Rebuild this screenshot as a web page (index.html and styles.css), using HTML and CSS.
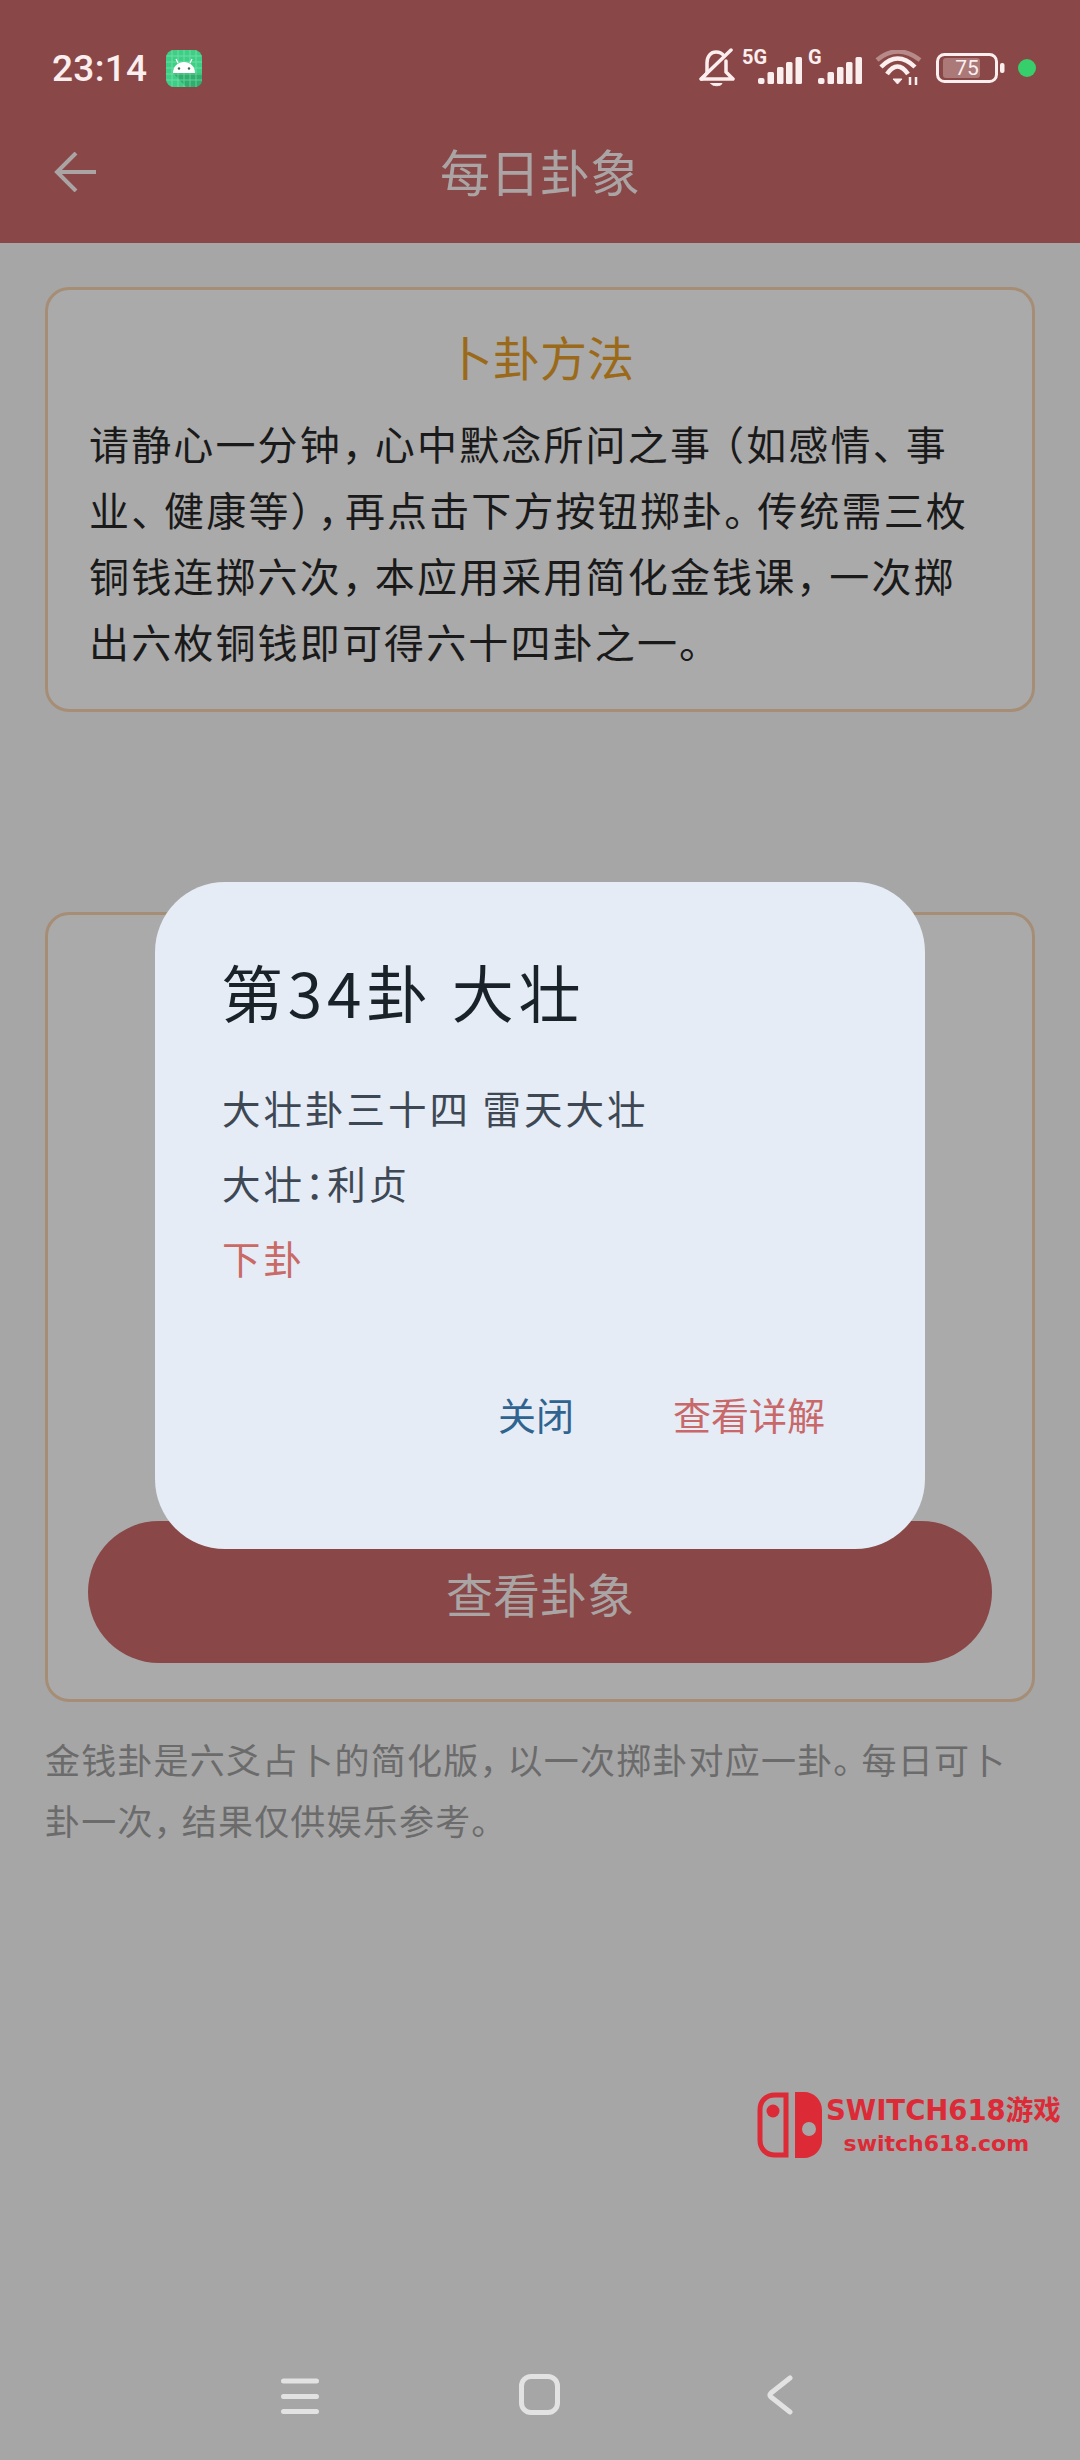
FILE: index.html
```html
<!DOCTYPE html>
<html lang="zh-CN">
<head>
<meta charset="utf-8">
<title>每日卦象</title>
<link rel="stylesheet" href="styles.css">
</head>
<body>
<div class="screen">
  <header class="header">
    <div class="status">
      <span class="time">23:14</span>
      <svg class="android" viewBox="0 0 36 37">
        <rect width="36" height="37" rx="8" fill="#3ecf86"/>
        <path d="M7 23 L20 37 H28 Q36 37 36 29 V23 Z" fill="#2fae6d"/>
        <path d="M6 0V37M12 0V37M18 0V37M24 0V37M30 0V37M0 6H36M0 12H36M0 18H36M0 24H36M0 30H36" stroke="#8fe6b8" stroke-width="1" opacity=".6"/>
        <path d="M7 23 C7 16 12 12 18 12 C24 12 29 16 29 23 Z" fill="#fff"/>
        <path d="M12 13 L10 9M24 13 L26 9" stroke="#fff" stroke-width="1.2"/>
        <circle cx="13" cy="18.5" r="1.2" fill="#3a6a50"/><circle cx="23" cy="18.5" r="1.2" fill="#3a6a50"/>
      </svg>
      <div class="status-icons">
        <svg class="bell" viewBox="0 0 36 40" fill="none" stroke="#fbeeee" stroke-width="3.5" stroke-linecap="round" stroke-linejoin="round">
          <path d="M3 31 L8 25 V15 C8 8 12 4 17 4 C20 4 23 5 25 8"/>
          <path d="M27 13 V24 L34 31 H3"/>
          <path d="M2 31 L32 2"/>
          <path d="M12 35.5 H23 C22 38.5 13 38.5 12 35.5 Z" fill="#fbeeee" stroke-width="1"/>
        </svg>
        <div class="signal signal-5g">
          <span class="net">5G</span>
          <svg class="bars" viewBox="0 0 44 27" fill="#fbeeee">
            <rect x="0" y="21" width="6.5" height="6" rx="2"/><rect x="9.5" y="15" width="6.5" height="12" rx="1.5"/><rect x="19" y="10" width="6.5" height="17" rx="1.5"/><rect x="28" y="5" width="6.5" height="22" rx="1.5"/><rect x="37.5" y="0" width="6.5" height="27" rx="1.5"/>
          </svg>
        </div>
        <div class="signal signal-g">
          <span class="net">G</span>
          <svg class="bars" viewBox="0 0 44 27" fill="#fbeeee">
            <rect x="0" y="21" width="6.5" height="6" rx="2"/><rect x="9.5" y="15" width="6.5" height="12" rx="1.5"/><rect x="19" y="10" width="6.5" height="17" rx="1.5"/><rect x="28" y="5" width="6.5" height="22" rx="1.5"/><rect x="37.5" y="0" width="6.5" height="27" rx="1.5"/>
          </svg>
        </div>
        <svg class="wifi" viewBox="0 0 47 36" fill="none" stroke="#fbeeee" stroke-width="4.5">
          <path d="M2 10 Q22.5 -7 45 10" opacity=".4"/>
          <path d="M6 17 Q22.5 0 40 17"/>
          <path d="M12 24 Q22.5 9 33 24"/>
          <path d="M18 29 H27 L22.5 34 Z" fill="#fbeeee" stroke-width="1"/>
          <path d="M35 27V35M41 27V35" stroke-width="2.5"/>
        </svg>
        <svg class="battery" viewBox="0 0 69 30">
          <rect x="1.5" y="1.5" width="59" height="27" rx="7" fill="none" stroke="#fbeeee" stroke-width="3"/>
          <rect x="7" y="5" width="37" height="20" rx="3" fill="#fbeeee" opacity=".3"/>
          <rect x="64" y="10" width="4.5" height="10" rx="2" fill="#fbeeee"/>
          <text x="31" y="22" class="batt-text">75</text>
        </svg>
        <span class="dot"></span>
      </div>
    </div>
    <div class="appbar">
      <svg class="back" viewBox="0 0 42 40" fill="none" stroke="#aaa4a4" stroke-width="4">
        <path d="M22 1 L3 20 L22 39"/><path d="M3 20 H42"/>
      </svg>
      <h1 class="title">每日卦象</h1>
    </div>
  </header>

  <main class="main">
    <section class="card card-method">
      <h2 class="card-title">卜卦方法</h2>
      <p class="method">请静心一分钟<span class="pc">，</span>心中默念所问之事<span class="po">（</span>如感情<span class="pc">、</span>事<br>业<span class="pc">、</span>健康等<span class="pw">）</span><span class="pw">，</span>再点击下方按钮掷卦<span class="pc">。</span>传统需三枚<br>铜钱连掷六次<span class="pc">，</span>本应用采用简化金钱课<span class="pc">，</span>一次掷<br>出六枚铜钱即可得六十四卦之一。</p>
    </section>
    <section class="card card-cast">
      <button class="cast-btn">查看卦象</button>
    </section>
    <p class="note">金钱卦是六爻占卜的简化版<span class="pc">，</span>以一次掷卦对应一卦<span class="pc">。</span>每日可卜<br>卦一次<span class="pc">，</span>结果仅供娱乐参考。</p>
  </main>

  <nav class="nav">
    <svg class="nav-menu" viewBox="0 0 38 36" fill="none" stroke="#e2e2e2" stroke-width="5" stroke-linecap="round">
      <path d="M2.5 3H35.5M2.5 18.5H35.5M2.5 33.5H35.5"/>
    </svg>
    <span class="nav-home"></span>
    <svg class="nav-back" viewBox="0 0 26 40" fill="none" stroke="#e2e2e2" stroke-width="5" stroke-linecap="round" stroke-linejoin="round">
      <path d="M23 3 L4 18 Q2 20 4 22 L23 37"/>
    </svg>
  </nav>

  <div class="modal" role="dialog">
    <h3 class="modal-title">第34卦 大壮</h3>
    <p class="modal-line">大壮卦三十四 雷天大壮</p>
    <p class="modal-line">大壮<span class="colon">：</span>利贞</p>
    <p class="modal-line modal-red">下卦</p>
    <div class="modal-actions">
      <span class="act act-close">关闭</span>
      <span class="act act-more">查看详解</span>
    </div>
  </div>

  <div class="mark">
    <svg class="mark-logo" viewBox="0 0 65 66">
      <path d="M29 3 H18 C9 3 3 9 3 18 V48 C3 57 9 63 18 63 H29 Z" fill="none" stroke="#dc2a37" stroke-width="5"/>
      <circle cx="16" cy="19" r="6.5" fill="#dc2a37"/>
      <path fill-rule="evenodd" d="M38 0 H47 C57 0 65 8 65 18 V48 C65 58 57 66 47 66 H38 Z M52 30 A7 7 0 1 0 52 44 A7 7 0 1 0 52 30 Z" fill="#dc2a37"/>
    </svg>
    <div class="mark-text">
      <span class="mark-a">SWITCH618游戏</span>
      <span class="mark-b">switch618.com</span>
    </div>
  </div>
</div>
</body>
</html>
```

FILE: styles.css
```css
* { box-sizing: border-box; }
html, body { margin: 0; padding: 0; }
body {
  font-family: "Noto Sans CJK SC", "Noto Sans", sans-serif;
  background: #a6a6a6;
  text-spacing-trim: space-all;
}
.screen {
  position: relative;
  width: 1080px;
  height: 2460px;
  overflow: hidden;
  display: flex;
  flex-direction: column;
  background: #a6a6a6;
}

/* header */
.header { height: 243px; background: #8a4747; flex: none; }
.status {
  height: 136px;
  display: flex;
  align-items: center;
  padding: 0 44px 0 52px;
}
.time {
  font-family: Roboto, sans-serif;
  font-weight: 500;
  font-size: 37px;
  line-height: 1;
  color: #fbeeee;
  letter-spacing: 0.3px;
}
.android { width: 36px; height: 37px; margin-left: 19px; }
.status-icons { margin-left: auto; display: flex; align-items: center; }
.bell { width: 36px; height: 40px; }
.signal { position: relative; height: 36px; margin-top: -4px; }
.signal-5g { width: 60px; margin-left: 7px; }
.signal-g { width: 54px; margin-left: 6px; }
.net {
  position: absolute;
  left: 0;
  top: -1px;
  font-family: Roboto, sans-serif;
  font-weight: 700;
  font-size: 20px;
  line-height: 20px;
  color: #fbeeee;
}
.bars { position: absolute; right: 0; bottom: 0; width: 44px; height: 27px; }
.wifi { width: 47px; height: 36px; margin-left: 13px; }
.battery { width: 69px; height: 30px; margin-left: 14px; }
.batt-text {
  font-family: Roboto, sans-serif;
  font-size: 21px;
  text-anchor: middle;
  fill: #fbeeee;
}
.dot { width: 18px; height: 18px; border-radius: 50%; background: #36cf6b; margin-left: 13px; }
.appbar {
  position: relative;
  height: 107px;
  display: flex;
  align-items: center;
  justify-content: center;
  padding-bottom: 40px;
}
.back { position: absolute; left: 54px; top: 16px; width: 42px; height: 40px; }
.title { margin: 0; font-size: 50px; font-weight: 400; line-height: 74px; color: #aaa4a4; }

/* main */
.main { flex: 1; padding: 44px 45px 0; display: flex; flex-direction: column; }
.card {
  border: 3px solid #a68e76;
  border-radius: 24px;
  background: #aaaaaa;
}
.card-method { height: 425px; padding: 33px 41px 0; }
.card-title {
  margin: 0;
  text-align: center;
  font-size: 47px;
  font-weight: 400;
  line-height: 66px;
  color: #9a6a1a;
}
.method {
  margin: 21px 0 0;
  font-size: 40px;
  line-height: 66px;
  letter-spacing: 2.15px;
  color: #1a1a1a;
  white-space: nowrap;
}
.pc, .pw, .po, .colon { font-feature-settings: "halt"; }
.pc { margin-right: .27em; }
.pw { margin-right: 5px; }
.po { margin-left: 12px; }
.card-cast {
  margin-top: 200px;
  height: 790px;
  padding: 0 40px 36px;
  display: flex;
  align-items: flex-end;
}
.cast-btn {
  width: 100%;
  height: 142px;
  border: 0;
  border-radius: 71px;
  background: #8a4747;
  color: #aaa5a5;
  font-family: inherit;
  font-size: 47px;
  letter-spacing: 0;
}
.note {
  margin: 26px 0 0;
  font-size: 35px;
  line-height: 61px;
  letter-spacing: 1.2px;
  color: #6b6b6b;
  white-space: nowrap;
}

/* nav */
.nav { position: relative; height: 110px; flex: none; display: flex; align-items: flex-start; }
.nav-menu { width: 38px; height: 36px; margin: 28px 0 0 281px; }
.nav-home {
  width: 41px;
  height: 41px;
  margin: 24px 0 0 200px;
  border: 5px solid #e2e2e2;
  border-radius: 12px;
}
.nav-back { width: 26px; height: 40px; margin: 25px 0 0 207px; }

/* modal */
.modal {
  position: absolute;
  left: 155px;
  top: 882px;
  width: 770px;
  height: 667px;
  padding: 66px 67px 0;
  border-radius: 70px;
  background: #e5ecf5;
}
.modal-title {
  margin: 0 0 36px -1px;
  font-size: 62px;
  font-weight: 400;
  line-height: 86px;
  letter-spacing: 4.8px;
  color: #1a2229;
}
.modal-line {
  margin: 0;
  font-size: 38.5px;
  line-height: 75px;
  letter-spacing: 3px;
  color: #3e4854;
}
.modal-red { color: #c96a66; }
.modal-actions {
  position: absolute;
  right: 100px;
  bottom: 107px;
  display: flex;
  gap: 99px;
}
.act { font-size: 38px; line-height: 56px; }
.act-close { color: #2f6490; }
.act-more { color: #c8686a; }

/* watermark */
.mark { position: absolute; left: 757px; top: 2092px; display: flex; }
.mark-logo { width: 65px; height: 66px; flex: none; }
.mark-text {
  display: flex;
  flex-direction: column;
  align-items: center;
  margin-left: 4px;
  font-family: "DejaVu Sans", sans-serif;
  font-weight: 700;
  color: #dc2a37;
  white-space: nowrap;
}
.mark-a { font-size: 27.5px; line-height: 36px; font-family: "DejaVu Sans", "Noto Sans CJK SC", sans-serif; }
.mark-b { font-size: 22px; line-height: 30px; margin: 1px 14px 0 0; }
```
